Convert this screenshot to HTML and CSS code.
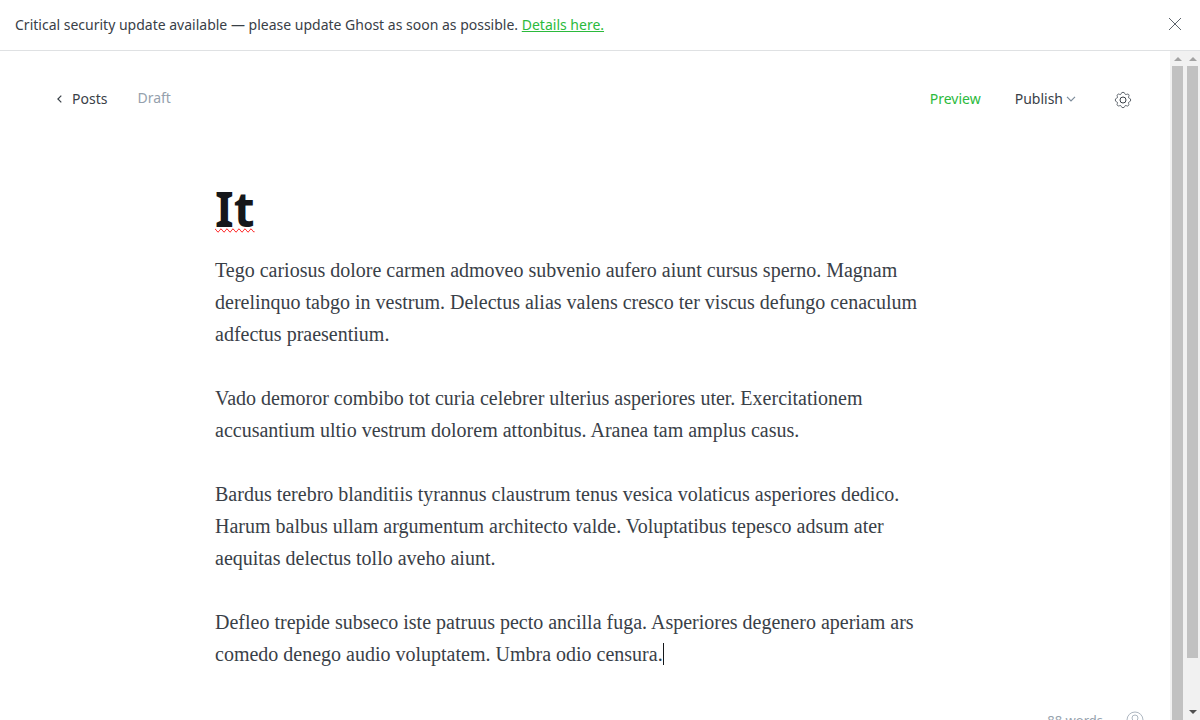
FILE: index.html
```html
<!DOCTYPE html>
<html lang="en">
<head>
<meta charset="utf-8">
<title>Editor - Ghost</title>
<link rel="stylesheet" href="styles.css">
</head>
<body>
<aside class="alert">
  <p class="alert-text">Critical security update available — please update Ghost as soon as possible. <a class="alert-link" href="#details">Details here.</a></p>
  <button class="icon-button" type="button" aria-label="Close">
    <svg class="icon-close" viewBox="0 0 12 12" width="12" height="12"><path d="M0 0L12 12M12 0L0 12"/></svg>
  </button>
</aside>
<div class="viewport">
  <main class="editor">
    <header class="toolbar">
      <a class="back" href="#posts"><svg class="icon-back" viewBox="0 0 5 8" width="5" height="8"><path d="M4.3 .6L.9 4l3.4 3.4"/></svg>Posts</a>
      <span class="status">Draft</span>
      <button class="tool preview" type="button">Preview</button>
      <button class="tool publish" type="button">Publish<svg class="icon-down" viewBox="0 0 10 6" width="10" height="6"><path d="M1 .8L5 4.8 9 .8"/></svg></button>
      <button class="icon-button settings" type="button" aria-label="Settings">
        <svg class="icon-gear" viewBox="0 0 18 18" width="18" height="18"><path d="M7.1 2.8Q7.4 1.3 9 1.3T10.9 2.8Q11.3 4 12.6 3.4 13.9 2.7 14.7 3.5T14.6 5.8Q14 6.9 15.3 7.2 16.7 7.6 16.7 9T15.3 10.9Q14 11.3 14.6 12.5 15.3 13.7 14.4 14.6T12.3 14.7Q11.1 14 10.8 15.3 10.4 16.7 9 16.7T7.2 15.3Q6.8 14 5.6 14.7 4.4 15.3 3.5 14.5T3.4 12.4Q4 11.3 2.7 10.9 1.3 10.5 1.3 9T2.7 7.1Q4 6.8 3.4 5.7 2.7 4.4 3.6 3.5T5.6 3.4Q6.8 4 7.1 2.8Z"/><circle class="gear-hub" cx="9" cy="9" r="3"/></svg>
      </button>
    </header>
    <article class="post">
      <input class="title" aria-label="Post title" value="It">
      <div class="body" role="textbox" aria-label="Post body" aria-multiline="true">
        <p>Tego cariosus dolore carmen admoveo subvenio aufero aiunt cursus sperno. Magnam derelinquo tabgo in vestrum. Delectus alias valens cresco ter viscus defungo cenaculum adfectus praesentium.</p>
        <p>Vado demoror combibo tot curia celebrer ulterius asperiores uter. Exercitationem accusantium ultio vestrum dolorem attonbitus. Aranea tam amplus casus.</p>
        <p>Bardus terebro blanditiis tyrannus claustrum tenus vesica volaticus asperiores dedico. Harum balbus ullam argumentum architecto valde. Voluptatibus tepesco adsum ater aequitas delectus tollo aveho aiunt.</p>
        <p>Defleo trepide subseco iste patruus pecto ancilla fuga. Asperiores degenero aperiam ars comedo denego audio voluptatem. Umbra odio censura.<span class="caret"></span></p>
      </div>
    </article>
    <footer class="footer">
      <span>88 words</span>
      <a class="help" href="#help" aria-label="Help"><svg class="icon-help" viewBox="0 0 18 18" width="18" height="18"><circle cx="9" cy="9" r="8"/><circle cx="9" cy="7" r="3"/><path d="M6.6 9v3h4.8V9"/></svg></a>
    </footer>
  </main>
  <div class="scrollbar scrollbar-inner" aria-hidden="true">
    <svg class="arrow arrow-up" viewBox="0 0 8 4" width="8" height="4"><path d="M0 4L4 0l4 4z"/></svg>
    <div class="thumb"></div>
  </div>
  <div class="scrollbar scrollbar-outer" aria-hidden="true">
    <svg class="arrow arrow-up" viewBox="0 0 8 4" width="8" height="4"><path d="M0 4L4 0l4 4z"/></svg>
    <div class="track"><div class="thumb"></div></div>
    <svg class="arrow arrow-down" viewBox="0 0 8 4" width="8" height="4"><path d="M0 0l4 4 4-4z"/></svg>
  </div>
</div>
</body>
</html>
```
FILE: styles.css
```css
* { box-sizing: border-box; }

body {
  display: flex;
  flex-direction: column;
  height: 100vh;
  margin: 0;
  overflow: hidden;
  background: #fff;
  color: #394047;
  font: 14px/20px "Noto Sans", sans-serif;
}

button, input {
  padding: 0;
  border: 0;
  outline: 0;
  background: none;
  color: inherit;
  font: inherit;
}

svg { display: block; fill: none; }

.alert {
  display: flex;
  flex: none;
  align-items: flex-start;
  justify-content: space-between;
  padding: 15px 19px 15px 15px;
  border-bottom: 1px solid #dfe1e3;
}

.alert-text { margin: 0; }
.alert-link { color: #2bba3c; }
.alert .icon-button { padding-top: 3px; }
.icon-close { stroke: #5d646c; stroke-width: 1; }

.viewport {
  display: flex;
  flex: 1;
  min-height: 0;
}

.editor {
  flex: 1;
  min-width: 0;
  overflow: hidden;
}

.toolbar {
  display: flex;
  align-items: center;
  height: 96px;
  padding: 0 38px 0 57px;
}

.back {
  display: flex;
  align-items: center;
  gap: 10px;
  color: inherit;
  text-decoration: none;
}

.icon-back { stroke: #394047; stroke-width: 1.2; }
.status { margin-left: 30px; padding-bottom: 2px; color: #95a1ad; }
.preview { margin-left: auto; color: #2bba3c; }

.publish {
  display: flex;
  align-items: center;
  gap: 3px;
  margin-left: 34px;
}

.icon-down { stroke: #7c8b9a; stroke-width: 1.2; }
.settings { margin-left: 38px; padding-top: 2px; }
.icon-gear { stroke: #5d646c; stroke-width: 1; }
.gear-hub { stroke: #394047; }

.post {
  max-width: 740px;
  margin: 0 auto;
  padding-top: 31px;
}

.title {
  display: block;
  width: 100%;
  height: 62px;
  color: #15171a;
  font-size: 48px;
  font-weight: 700;
  line-height: 62px;
  text-decoration: spelling-error;
}

.body {
  max-width: 720px;
  padding-top: 14px;
  font: 20px/32px "Liberation Serif", serif;
}

.body p { margin: 0 0 32px; }

.caret {
  display: inline-block;
  width: 1px;
  height: 22px;
  background: #15171a;
  vertical-align: -4px;
}

.footer {
  display: flex;
  align-items: center;
  justify-content: flex-end;
  gap: 23px;
  padding: 8px 26px 24px;
  color: #95a1ad;
  font-size: 13px;
}

.icon-help { stroke: #aeb7c1; }

.scrollbar {
  display: flex;
  flex: none;
  flex-direction: column;
  align-items: center;
  width: 15px;
  padding-top: 6px;
  background: #f1f1f1;
}

.arrow { flex: none; fill: #a3a3a3; }
.arrow-down { fill: #505050; margin: 5px 0 6px; }

.thumb {
  flex: 1;
  width: 11px;
  margin-top: 5px;
  background: #c1c1c1;
}

.track {
  display: flex;
  flex: 1;
}

.track .thumb { flex: none; height: 92%; }
```
